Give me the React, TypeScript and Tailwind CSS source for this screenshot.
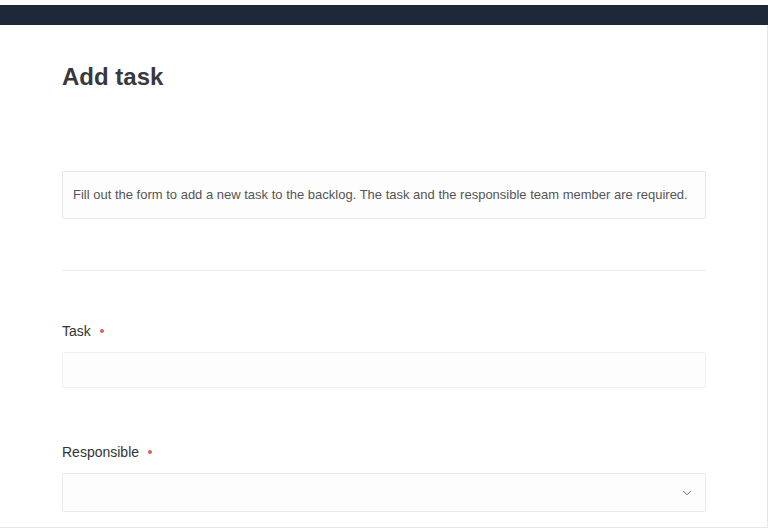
import { ChevronDown } from "lucide-react";

function RequiredDot() {
  return <span className="ml-[9px] inline-block h-[4px] w-[4px] rounded-full bg-[#e25a5a]" />;
}

export default function App() {
  return (
    <div className="flex h-[528px] w-full flex-col bg-white font-['Liberation_Sans',Arial,sans-serif]">
      <div className="h-[5px] bg-white" />
      <div className="h-[20px] bg-[#1f2838]" />
      <div className="flex flex-1 flex-col border-b border-r border-[#e6e6e6] pl-[62px] pt-[36px]">
        <div className="w-[644px]">
          <h1 className="text-2xl leading-8 font-bold text-[#38383d]">Add task</h1>

          <div className="mt-[78px] flex h-[48px] items-center rounded-[2px] border border-[#e9e9e9] bg-[#fdfdfd] px-[10px]">
            <p className="text-[13px] text-[#555]">
              Fill out the form to add a new task to the backlog. The task and the responsible team member are
              required.
            </p>
          </div>

          <div className="mt-[51px] h-px bg-[#ececec]" />

          <label className="mt-[50px] flex h-5 items-center text-sm text-[#333]">
            Task
            <RequiredDot />
          </label>
          <input
            type="text"
            className="mt-[11px] h-[36px] w-full rounded-[2px] border border-[#f0f0f0] bg-[#fdfdfd] px-3 text-sm outline-none"
          />

          <label className="mt-[54px] flex h-5 items-center text-sm text-[#333]">
            Responsible
            <RequiredDot />
          </label>
          <div className="mt-[11px] flex h-[39px] w-full items-center justify-end rounded-[2px] border border-[#eaeaea] bg-[#fdfdfd] pr-[11px]">
            <ChevronDown className="h-[14px] w-[14px] text-[#555]" strokeWidth={1.5} />
          </div>
        </div>
      </div>
    </div>
  );
}
